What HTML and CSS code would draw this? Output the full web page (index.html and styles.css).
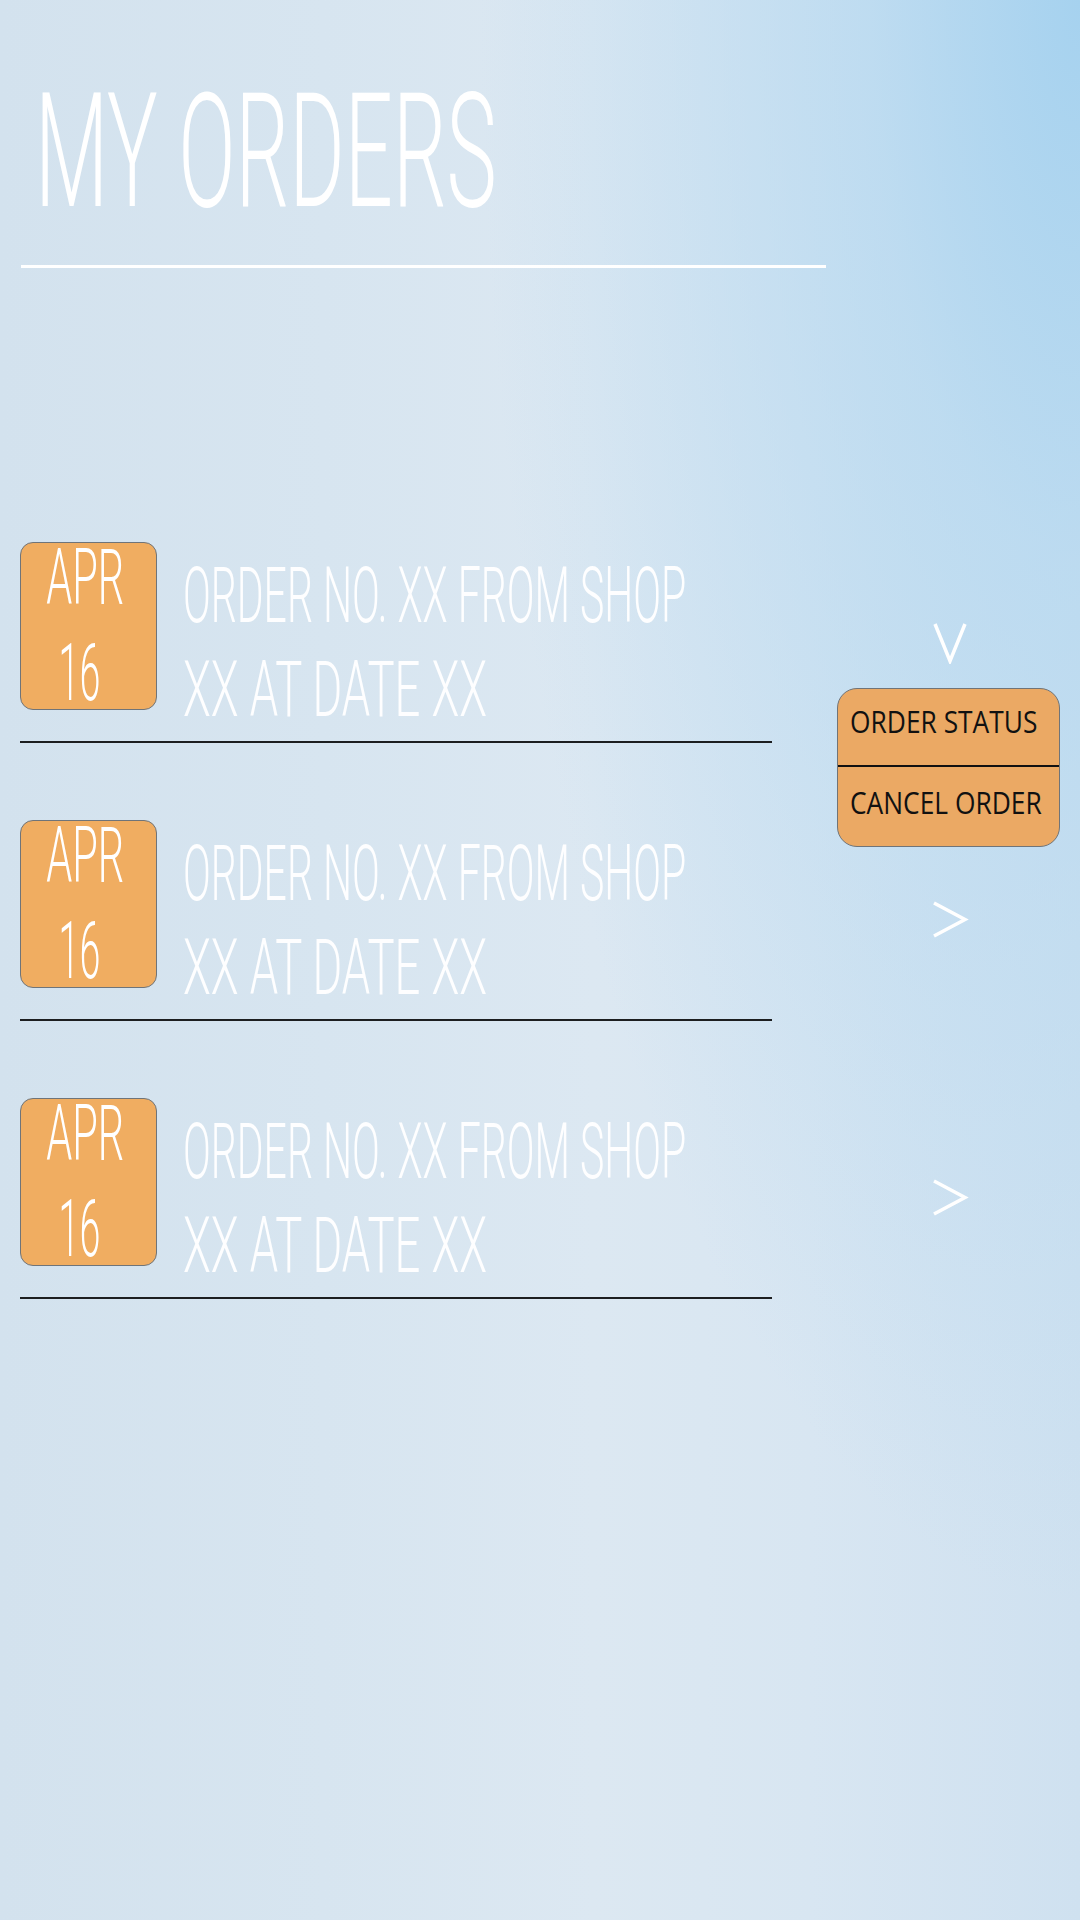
FILE: index.html
```html
<!DOCTYPE html>
<html lang="en">
<head>
<meta charset="utf-8">
<title>My Orders</title>
<link rel="stylesheet" href="styles.css">
</head>
<body>
<main class="screen">
  <header class="header">
    <h1 class="title"><span class="title-text">MY ORDERS</span></h1>
    <div class="title-rule"></div>
  </header>

  <section class="orders">
    <article class="order">
      <div class="order-main">
        <div class="date-box">
          <span class="date-month">APR</span>
          <span class="date-day">16</span>
        </div>
        <div class="order-text">
          <span class="order-line">ORDER NO. XX FROM SHOP</span>
          <span class="order-line order-line-second">XX AT DATE XX</span>
        </div>
        <button class="chevron chevron-open" aria-label="Collapse">
          <svg width="40" height="42" viewBox="0 0 40 42"><polyline points="5,2 20,39 35,2" fill="none" stroke="#fff" stroke-width="3.5"/></svg>
        </button>
      </div>
      <div class="order-rule"></div>
      <div class="menu">
        <div class="menu-item menu-item-first"><span class="menu-label">ORDER STATUS</span></div>
        <div class="menu-item menu-item-last"><span class="menu-label">CANCEL ORDER</span></div>
      </div>
    </article>

    <article class="order">
      <div class="order-main">
        <div class="date-box">
          <span class="date-month">APR</span>
          <span class="date-day">16</span>
        </div>
        <div class="order-text">
          <span class="order-line">ORDER NO. XX FROM SHOP</span>
          <span class="order-line order-line-second">XX AT DATE XX</span>
        </div>
        <button class="chevron" aria-label="Expand">
          <svg width="40" height="42" viewBox="0 0 40 42"><polyline points="4,3 35,19.5 4,36" fill="none" stroke="#fff" stroke-width="3.5"/></svg>
        </button>
      </div>
      <div class="order-rule"></div>
    </article>

    <article class="order">
      <div class="order-main">
        <div class="date-box">
          <span class="date-month">APR</span>
          <span class="date-day">16</span>
        </div>
        <div class="order-text">
          <span class="order-line">ORDER NO. XX FROM SHOP</span>
          <span class="order-line order-line-second">XX AT DATE XX</span>
        </div>
        <button class="chevron" aria-label="Expand">
          <svg width="40" height="42" viewBox="0 0 40 42"><polyline points="4,3 35,19.5 4,36" fill="none" stroke="#fff" stroke-width="3.5"/></svg>
        </button>
      </div>
      <div class="order-rule"></div>
    </article>
  </section>
</main>
</body>
</html>
```

FILE: styles.css
```css
html, body {
  margin: 0;
  padding: 0;
  overflow: hidden;
}

body {
  width: 1080px;
  height: 1920px;
  font-family: Roboto, "Liberation Sans", sans-serif;
  color: #fff;
}

.screen {
  width: 1080px;
  height: 1920px;
  display: flex;
  flex-direction: column;
  background:
    radial-gradient(ellipse 600px 1600px at 100% 0%, rgba(166, 210, 239, 1) 0%, rgba(180, 216, 240, 0.7) 35%, rgba(200, 225, 243, 0) 100%),
    linear-gradient(90deg, #d3e2ee 0%, #d7e5f0 30%, #dce8f2 55%, #d8e6f2 75%, #cfe1f0 100%);
}

/* Header */
.header {
  padding-top: 72px;
}

.title {
  margin: 0;
  padding-left: 35px;
  height: 159px;
  font-size: 159px;
  line-height: 159px;
  font-weight: 300;
  white-space: nowrap;
}

.title-text {
  display: inline-block;
  transform: scaleX(0.532);
  transform-origin: left center;
}

.title-rule {
  margin: 34px 0 0 21px;
  width: 805px;
  height: 3px;
  background: #fff;
}

/* Orders list */
.orders {
  padding: 274px 20px 0 20px;
  display: flex;
  flex-direction: column;
  gap: 77px;
}

.order {
  position: relative;
}

.order-main {
  height: 168px;
  display: flex;
  align-items: flex-start;
}

.date-box {
  box-sizing: border-box;
  flex: none;
  width: 137px;
  height: 168px;
  border: 1px solid #6f7479;
  border-radius: 13px;
  background: #f0ad61;
  display: flex;
  flex-direction: column;
  align-items: center;
  overflow: visible;
}

.date-month,
.date-day {
  display: block;
  white-space: nowrap;
  font-weight: 300;
}

.date-month {
  margin-top: -3px;
  font-size: 77px;
  line-height: 77px;
  transform: translateX(-3px) scaleX(0.54);
}

.date-day {
  margin-top: 17px;
  font-size: 80px;
  line-height: 78px;
  transform: translateX(-9px) scaleX(0.47);
}

.order-text {
  flex: none;
  width: 560px;
  margin: 7px 0 0 26px;
  display: flex;
  flex-direction: column;
  align-items: flex-start;
}

.order-line {
  display: block;
  white-space: nowrap;
  font-size: 77px;
  line-height: 94px;
  font-weight: 300;
  color: rgba(255, 255, 255, 0.96);
  transform: scaleX(0.532);
  transform-origin: left center;
}

.order-line-second {
  transform: scaleX(0.59);
}

.chevron {
  flex: none;
  margin: 80px 90px 0 auto;
  padding: 0;
  width: 40px;
  height: 42px;
  border: 0;
  background: none;
  display: block;
}

.chevron svg {
  display: block;
}

.order-rule {
  margin-top: 31px;
  width: 752px;
  height: 2px;
  background: #1c1e20;
}

/* Dropdown menu */
.menu {
  position: absolute;
  top: 146px;
  left: 817px;
  box-sizing: border-box;
  width: 223px;
  height: 159px;
  border: 1px solid #707478;
  border-radius: 20px;
  background: #eba964;
  display: flex;
  flex-direction: column;
  overflow: hidden;
  font-family: "Open Sans", "Noto Sans", sans-serif;
  color: #111;
}

.menu-item {
  box-sizing: border-box;
  white-space: nowrap;
  font-size: 31px;
  line-height: 31px;
}

.menu-item-first {
  height: 78px;
  padding: 17px 0 0 12px;
  border-bottom: 2px solid #111;
}

.menu-item-last {
  flex: 1;
  padding: 20px 0 0 12px;
}

.menu-label {
  display: inline-block;
  transform: scaleX(0.85);
  transform-origin: left center;
}
```
